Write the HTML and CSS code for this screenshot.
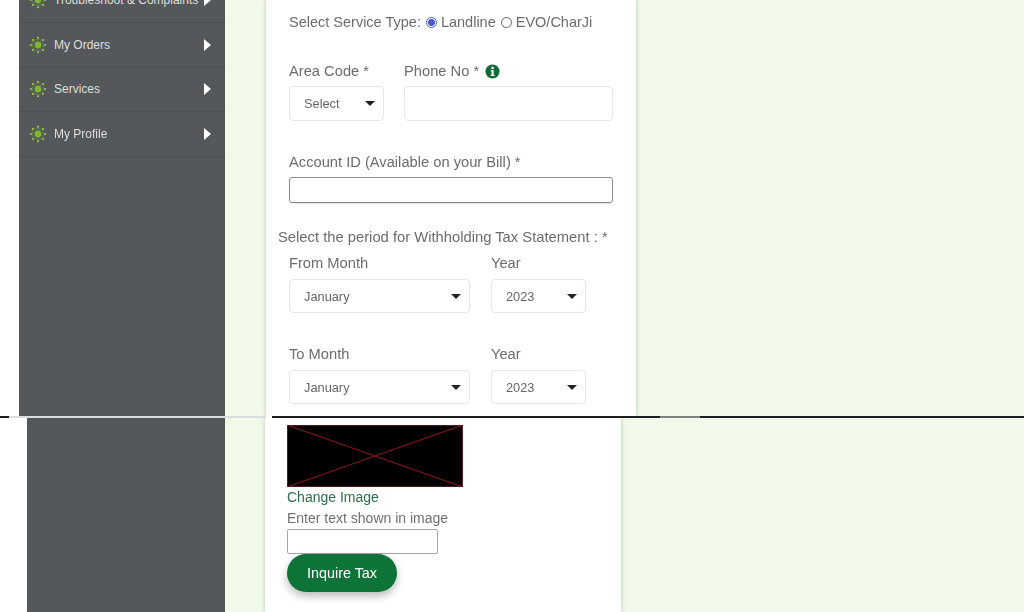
FILE: index.html
```html
<!DOCTYPE html>
<html lang="en">
<head>
<meta charset="utf-8">
<title>Withholding Tax Statement</title>
<link rel="stylesheet" href="styles.css">
</head>
<body>
<svg class="defs" width="0" height="0" aria-hidden="true">
  <symbol id="leaf" viewBox="0 0 18 18">
    <circle cx="9" cy="9" r="3.4" fill="#7db52f"/>
    <circle cx="9" cy="9" r="5.6" fill="none" stroke="#6f9c35" stroke-width="0.8" opacity="0.7"/>
    <g fill="#a5d04f">
      <circle cx="9" cy="1.8" r="1"/><circle cx="9" cy="16.2" r="1"/>
      <circle cx="1.8" cy="9" r="1"/><circle cx="16.2" cy="9" r="1"/>
      <circle cx="3.9" cy="3.9" r="1"/><circle cx="14.1" cy="3.9" r="1"/>
      <circle cx="3.9" cy="14.1" r="1"/><circle cx="14.1" cy="14.1" r="1"/>
    </g>
  </symbol>
</svg>

<div class="pane pane-top">
  <aside class="sidebar sidebar-top">
    <ul class="menu">
      <li class="menu-item"><svg class="leaf"><use href="#leaf"/></svg><span class="menu-label">Troubleshoot &amp; Complaints</span><i class="arrow"></i></li>
      <li class="menu-item"><svg class="leaf"><use href="#leaf"/></svg><span class="menu-label">My Orders</span><i class="arrow"></i></li>
      <li class="menu-item"><svg class="leaf"><use href="#leaf"/></svg><span class="menu-label">Services</span><i class="arrow"></i></li>
      <li class="menu-item"><svg class="leaf"><use href="#leaf"/></svg><span class="menu-label">My Profile</span><i class="arrow"></i></li>
    </ul>
  </aside>
  <div class="gutter gutter-top"></div>
  <main class="card card-top">
    <div class="service-row">
      <span>Select Service Type:</span>
      <i class="radio radio-on"></i><span>Landline</span>
      <i class="radio"></i><span>EVO/CharJi</span>
    </div>

    <div class="field-row row-phone">
      <div class="field">
        <label class="label">Area Code *</label>
        <div class="select w-area"><span>Select</span><i class="caret"></i></div>
      </div>
      <div class="field">
        <label class="label">Phone No * <svg class="info" viewBox="0 0 16 16"><circle cx="8" cy="8" r="7.5" fill="#0f6b35"/><rect x="6.9" y="3" width="2.4" height="2.4" fill="#fff"/><path d="M6.2 6.5h3v5h1v1.3H6v-1.3h1V7.8h-.8z" fill="#fff"/></svg></label>
        <div class="text-box w-phone"></div>
      </div>
    </div>

    <div class="account">
      <label class="label">Account ID (Available on your Bill) *</label>
      <div class="account-box"></div>
    </div>

    <p class="period">Select the period for Withholding Tax Statement : *</p>

    <div class="field-row row-from">
      <div class="field">
        <label class="label">From Month</label>
        <div class="select w-month"><span>January</span><i class="caret"></i></div>
      </div>
      <div class="field">
        <label class="label">Year</label>
        <div class="select w-year"><span>2023</span><i class="caret"></i></div>
      </div>
    </div>

    <div class="field-row row-to">
      <div class="field">
        <label class="label">To Month</label>
        <div class="select w-month"><span>January</span><i class="caret"></i></div>
      </div>
      <div class="field">
        <label class="label">Year</label>
        <div class="select w-year"><span>2023</span><i class="caret"></i></div>
      </div>
    </div>
  </main>
  <div class="rest"></div>
</div>

<div class="seam">
  <div class="seam-black seam-a"></div>
  <div class="seam-light seam-b"></div>
  <div class="seam-white seam-c"></div>
  <div class="seam-black seam-d"></div>
  <div class="seam-grey seam-e"></div>
  <div class="seam-black seam-f"></div>
</div>

<div class="pane pane-bottom">
  <aside class="sidebar sidebar-bottom"></aside>
  <div class="gutter gutter-bottom"></div>
  <section class="card card-bottom">
    <svg class="captcha" viewBox="0 0 176 62" preserveAspectRatio="none" role="img" aria-label="Captcha image">
      <rect width="176" height="62" fill="#000"/>
      <path d="M0 0L176 62M176 0L0 62" stroke="#8a1a1c" stroke-width="1.1"/>
      <rect x="0.5" y="0.5" width="175" height="61" fill="none" stroke="#5a1a1c"/>
    </svg>
    <a class="change-link" href="#">Change Image</a>
    <label class="captcha-label">Enter text shown in image</label>
    <div class="captcha-box"></div>
    <button class="inquire" type="button">Inquire Tax</button>
  </section>
  <div class="rest"></div>
</div>
</body>
</html>
```
FILE: styles.css
```css
* { box-sizing: border-box; }
html, body { margin: 0; padding: 0; }
body {
  width: 1024px;
  height: 612px;
  overflow: hidden;
  background: #fff;
  font-family: "Liberation Sans", Arial, sans-serif;
  color: #6c6c6c;
  display: flex;
  flex-direction: column;
  filter: blur(0.4px);
}
.defs { position: absolute; }

.pane { display: flex; overflow: hidden; }
.pane-top { height: 416px; }
.pane-bottom { height: 194px; }

.sidebar { width: 206px; background: #55585a; flex: none; }
.sidebar-top { margin-left: 19px; }
.sidebar-bottom { margin-left: 27px; width: 198px; }

.menu { list-style: none; margin: -21.5px 0 0; padding: 0; }
.menu-item {
  height: 44.5px;
  display: flex;
  align-items: center;
  padding-left: 10px;
  border-bottom: 1px solid #4b4e50;
  color: #dedede;
  font-size: 12px;
}
.leaf { width: 18px; height: 18px; flex: none; }
.menu-label { margin-left: 7px; width: 150px; white-space: nowrap; }
.arrow {
  width: 0;
  height: 0;
  border-left: 7px solid #fff;
  border-top: 6px solid transparent;
  border-bottom: 6px solid transparent;
}

.gutter { background: #f1fae8; flex: none; }
.gutter-top { width: 41px; }
.gutter-bottom { width: 40px; }
.rest { flex: 1; background: #f1fae8; }

.card {
  flex: none;
  background: #fff;
  box-shadow: 0 0 5px rgba(90, 100, 90, 0.35);
  position: relative;
}
.card-top { width: 370px; height: 416px; padding-left: 23px; }
.card-bottom {
  width: 356px;
  padding: 7px 0 0 22px;
  display: flex;
  flex-direction: column;
  align-items: flex-start;
}

.service-row {
  display: flex;
  align-items: center;
  height: 16px;
  margin-top: 14px;
  font-size: 14.5px;
  white-space: nowrap;
}
.radio {
  width: 11px;
  height: 11px;
  border-radius: 50%;
  border: 1px solid #666;
  background: #fff;
  margin: 0 4px 0 5px;
  flex: none;
}
.radio-on {
  border-color: #4a5fc4;
  background: radial-gradient(circle, #4a5fc4 0 3.2px, #fff 3.8px);
}

.label {
  display: flex;
  align-items: center;
  gap: 2px;
  height: 16px;
  font-size: 14.7px;
  white-space: pre;
}
.info { width: 15px; height: 15px; }

.field-row { display: flex; }
.field { display: flex; flex-direction: column; gap: 8px; }
.row-phone { margin-top: 33px; gap: 20px; }
.row-phone .field { gap: 7px; }
.row-from { margin-top: 10px; gap: 21px; }
.row-to { margin-top: 33px; gap: 21px; }

.select, .text-box {
  height: 34px;
  background: #fff;
  border: 1px solid #e6e6e6;
  border-radius: 4px;
  display: flex;
  align-items: center;
  justify-content: space-between;
  padding: 0 8px 0 14px;
  font-size: 12.8px;
  color: #666;
}
.w-area { width: 95px; }
.w-phone { width: 209px; }
.w-month { width: 181px; }
.w-year { width: 95px; }
.row-phone .select, .row-phone .text-box { height: 35px; }

.caret {
  width: 0;
  height: 0;
  border-left: 5px solid transparent;
  border-right: 5px solid transparent;
  border-top: 5px solid #222;
}

.account { margin-top: 33px; display: flex; flex-direction: column; gap: 7px; }
.account-box {
  width: 324px;
  height: 26px;
  border: 1px solid #8d8d8d;
  border-radius: 3px;
  box-shadow: 0 1px 1px rgba(0, 0, 0, 0.12);
}

.period {
  margin: 26px 0 0 -11px;
  height: 16px;
  line-height: 16px;
  font-size: 14.77px;
  white-space: nowrap;
}

.seam { display: flex; height: 2px; flex: none; }
.seam-black { background: #1b1f1d; }
.seam-light { background: #dcdcdc; }
.seam-white { background: #fff; }
.seam-grey { background: #7d827c; }
.seam-a { width: 9px; }
.seam-b { width: 257px; }
.seam-c { width: 6px; }
.seam-d { width: 388px; }
.seam-e { width: 40px; }
.seam-f { flex: 1; }

.captcha { width: 176px; height: 62px; display: block; flex: none; }
.change-link {
  margin-top: 2px;
  height: 17px;
  line-height: 17px;
  font-size: 14px;
  color: #2b6e49;
  text-decoration: none;
}
.captcha-label {
  margin-top: 4px;
  height: 17px;
  line-height: 17px;
  font-size: 14px;
  color: #707070;
}
.captcha-box {
  margin-top: 2px;
  width: 151px;
  height: 25px;
  border: 1px solid #a5a5a5;
  border-radius: 2px;
  flex: none;
}
.inquire {
  width: 110px;
  height: 38px;
  border: 0;
  border-radius: 19px;
  background: #0e7338;
  color: #fff;
  font-family: inherit;
  font-size: 14.4px;
  padding: 0;
  box-shadow: 0 4px 8px rgba(0, 0, 0, 0.28);
  flex: none;
}
```
